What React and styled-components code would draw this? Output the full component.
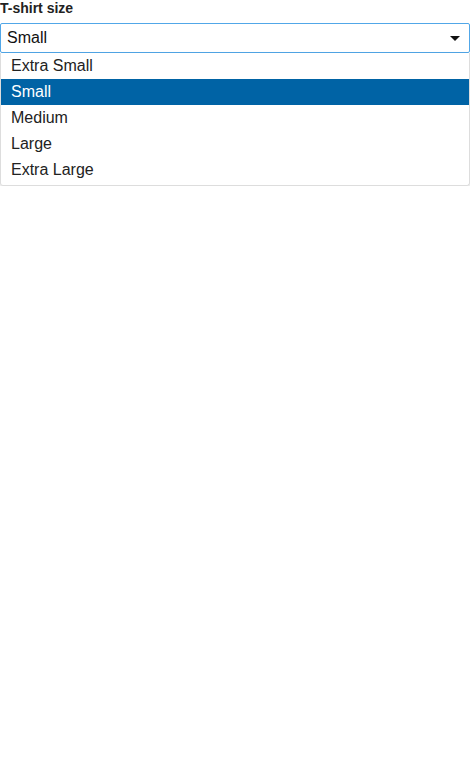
import React, { useState } from "react";
import styled, { createGlobalStyle } from "styled-components";

const sizes = ["Extra Small", "Small", "Medium", "Large", "Extra Large"];

export default function App() {
  const [value, setValue] = useState("Small");
  return (
    <>
      <GlobalStyle />
      <Field>
        <Label>T-shirt size</Label>
        <Select>
          <SelectValue>{value}</SelectValue>
          <Caret />
        </Select>
        <Menu>
          {sizes.map((s) => (
            <Option key={s} active={s === value} onClick={() => setValue(s)}>
              {s}
            </Option>
          ))}
        </Menu>
      </Field>
    </>
  );
}

const GlobalStyle = createGlobalStyle`
  body {
    margin: 0;
    background: #fff;
    font-family: "Liberation Sans", Arial, sans-serif;
    color: #222;
  }
`;

const Field = styled.div`
  display: flex;
  flex-direction: column;
  width: 470px;
`;

const Label = styled.label`
  font-size: 14px;
  font-weight: bold;
  line-height: 17px;
  height: 23px;
  color: #222;
`;

const Select = styled.div`
  display: flex;
  align-items: center;
  justify-content: space-between;
  height: 30px;
  box-sizing: border-box;
  border: 1px solid #51a7e8;
  border-radius: 2px;
  padding: 0 8px 0 6px;
  font-size: 16px;
  color: #111;
`;

const SelectValue = styled.span`
  line-height: 28px;
`;

const Caret = styled.span`
  width: 0;
  height: 0;
  border-left: 5px solid transparent;
  border-right: 5px solid transparent;
  border-top: 5px solid #111;
  margin-right: 1px;
`;

const Menu = styled.ul`
  list-style: none;
  margin: 0;
  padding: 0 0 2px;
  border: 1px solid #ddd;
  border-top: none;
  border-radius: 0 0 3px 3px;
  box-shadow: 0 1px 3px rgba(0, 0, 0, 0.15);
`;

const Option = styled.li`
  height: 26px;
  line-height: 26px;
  padding: 0 10px;
  font-size: 16px;
  color: ${(p) => (p.active ? "#fff" : "#222")};
  background: ${(p) => (p.active ? "#0063a5" : "transparent")};
  cursor: pointer;
`;
